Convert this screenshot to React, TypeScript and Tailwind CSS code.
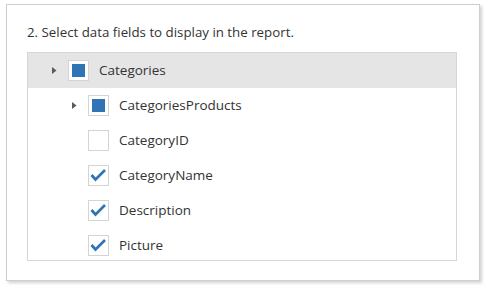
import * as React from "react"

type Node = { label: string; level: number; expandable?: boolean; state: "partial" | "checked" | "unchecked" }

const nodes: Node[] = [
  { label: "Categories", level: 0, expandable: true, state: "partial" },
  { label: "CategoriesProducts", level: 1, expandable: true, state: "partial" },
  { label: "CategoryID", level: 1, state: "unchecked" },
  { label: "CategoryName", level: 1, state: "checked" },
  { label: "Description", level: 1, state: "checked" },
  { label: "Picture", level: 1, state: "checked" },
]

function CheckBox({ state }: { state: Node["state"] }) {
  return (
    <div className="flex h-[21px] w-[21px] shrink-0 items-center justify-center border border-[#d4d4d4] bg-white">
      {state === "partial" && <div className="h-[13px] w-[13px] bg-[#2f75b5]" />}
      {state === "checked" && (
        <svg width="19" height="19" viewBox="0 0 19 19">
          <path d="M2.5 9 L6.5 13.5 L16 4" fill="none" stroke="#2f75b5" strokeWidth="2.7" />
        </svg>
      )}
    </div>
  )
}

export default function App() {
  return (
    <div className="min-h-screen bg-white pl-[6px] pt-[4px] font-['Open_Sans',sans-serif] text-[#333]">
      <div className="h-[277px] w-[474px] border border-[#cfcfcf] bg-white px-[20px] pt-[17px] shadow-[2px_2px_3px_rgba(0,0,0,0.18)]">
        <div className="text-[13.3px] leading-[20px]">2. Select data fields to display in the report.</div>
        <div className="mt-[10px] h-[209px] w-[430px] overflow-hidden border border-[#d6d6d6]">
          {nodes.map((n, i) => (
            <div
              key={n.label}
              className={
                "flex h-[35px] items-center text-[13.5px] " + (i === 0 ? "bg-[#e5e5e5]" : "")
              }
              style={{ paddingLeft: 20 + n.level * 20 }}
            >
              <div className="flex w-5 shrink-0 items-center">
                {n.expandable && (
                  <svg width="5" height="7" viewBox="0 0 5 7" className="ml-1">
                    <path d="M0 0 L4.5 3.5 L0 7 Z" fill="#5a5a5a" />
                  </svg>
                )}
              </div>
              <CheckBox state={n.state} />
              <span className="ml-[10px]">{n.label}</span>
            </div>
          ))}
        </div>
      </div>
    </div>
  )
}
